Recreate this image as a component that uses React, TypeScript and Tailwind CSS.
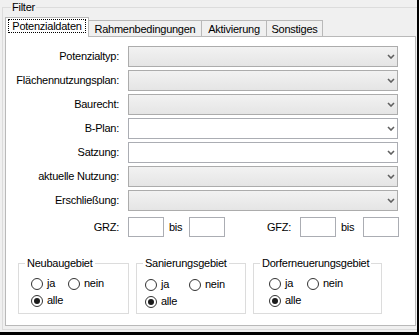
import clsx from 'clsx';

interface ComboRow {
  label: string;
  editable?: boolean;
}

const comboRows: ComboRow[] = [
  { label: 'Potenzialtyp:' },
  { label: 'Flächennutzungsplan:' },
  { label: 'Baurecht:' },
  { label: 'B-Plan:', editable: true },
  { label: 'Satzung:', editable: true },
  { label: 'aktuelle Nutzung:' },
  { label: 'Erschließung:' },
];

const tabs = [
  { label: 'Rahmenbedingungen', width: 'w-[113px]' },
  { label: 'Aktivierung', width: 'w-[65px]' },
  { label: 'Sonstiges', width: 'w-[56px]' },
];

function Chevron() {
  return (
    <svg width="8" height="5" viewBox="0 0 8 5" fill="none">
      <polyline points="1,1 4,4 7,1" stroke="#606060" strokeWidth="1.6" />
    </svg>
  );
}

function Combo({ editable = false }: { editable?: boolean }) {
  return (
    <div
      className={clsx(
        'flex h-[21px] items-center justify-end border pr-[2px]',
        editable
          ? 'border-[#abadb3] bg-white'
          : 'border-[#acacac] bg-gradient-to-b from-[#f2f2f2] to-[#e5e5e5]',
      )}
    >
      <Chevron />
    </div>
  );
}

function TextBox() {
  return <div className="h-[20px] w-[36px] border border-[#abadb3] bg-white" />;
}

function Radio({ label, checked = false, className }: { label: string; checked?: boolean; className?: string }) {
  return (
    <span className={clsx('flex h-[17px] items-center', className)}>
      <span className="flex h-[12px] w-[12px] items-center justify-center rounded-full border border-[#333333] bg-white">
        {checked ? <span className="h-[6px] w-[6px] rounded-full bg-[#1a1a1a]" /> : null}
      </span>
      <span className="ml-[4px]">{label}</span>
    </span>
  );
}

interface RadioGroupProps {
  title: string;
  width: string;
  inner: string;
  jaWidth: string;
}

function RadioGroup({ title, width, inner, jaWidth }: RadioGroupProps) {
  return (
    <fieldset className={clsx('h-[58px] border border-[#dcdcdc]', width)}>
      <legend className="ml-[6px] px-[2px] leading-[14px]">{title}</legend>
      <div className={inner}>
        <div className="flex">
          <Radio label="ja" className={jaWidth} />
          <Radio label="nein" />
        </div>
        <Radio label="alle" checked />
      </div>
    </fieldset>
  );
}

export default function App() {
  return (
    <div className="h-[335px] w-[419px] overflow-hidden border-r-2 border-b-[3px] border-black bg-[#f0f0f0] font-['Liberation_Sans',Arial,sans-serif] text-[11px] tracking-[-0.25px] text-black">
      <fieldset className="ml-[2px] h-[330px] w-[415px] border border-r-0 border-[#dcdcdc] pr-[1px] pb-[3px] pl-[2px]">
        <legend className="ml-[6px] px-[1px] leading-[14px]">Filter</legend>

        <div className="mt-[3px] flex h-[19px] items-end">
          <div className="relative z-10 -mb-[1px] h-[20px] w-[84px] border border-b-0 border-[#b9b9b9] bg-white px-[2px] pt-[1px]">
            <div className="flex h-[14px] items-center justify-center border border-dotted border-black leading-[12px]">
              Potenzialdaten
            </div>
          </div>
          {tabs.map((tab) => (
            <div
              key={tab.label}
              className={clsx(
                'flex h-[16px] items-center justify-center border-t border-r border-[#b9b9b9] bg-[#f0f0f0] leading-[14px]',
                tab.width,
              )}
            >
              {tab.label}
            </div>
          ))}
        </div>

        <div className="h-[290px] border border-[#b9b9b9] bg-white pt-[9px]">
          <div className="grid grid-cols-[113px_270px] gap-x-[9px] gap-y-[3px]">
            {comboRows.map((row) => (
              <div key={row.label} className="contents">
                <span className="text-right leading-[21px]">{row.label}</span>
                <Combo editable={row.editable} />
              </div>
            ))}
          </div>

          <div className="mt-[6px] flex h-[20px] items-center leading-[20px]">
            <span className="w-[113px] text-right">GRZ:</span>
            <div className="ml-[9px]">
              <TextBox />
            </div>
            <span className="w-[25px] pl-[5px]">bis</span>
            <TextBox />
            <span className="w-[66px] text-right">GFZ:</span>
            <div className="ml-[9px]">
              <TextBox />
            </div>
            <span className="w-[27px] pl-[5px]">bis</span>
            <TextBox />
          </div>

          <div className="mt-[19px] flex gap-[7px] pl-[12px]">
            <RadioGroup title="Neubaugebiet" width="w-[111px]" inner="pt-[5px] pb-[4px] pl-[12px]" jaWidth="w-[37px]" />
            <RadioGroup title="Sanierungsgebiet" width="w-[110px]" inner="pt-[6px] pb-[3px] pl-[8px]" jaWidth="w-[44px]" />
            <RadioGroup
              title="Dorferneuerungsgebiet"
              width="w-[129px]"
              inner="pt-[5px] pb-[4px] pl-[15px]"
              jaWidth="w-[38px]"
            />
          </div>
        </div>
      </fieldset>
    </div>
  );
}
